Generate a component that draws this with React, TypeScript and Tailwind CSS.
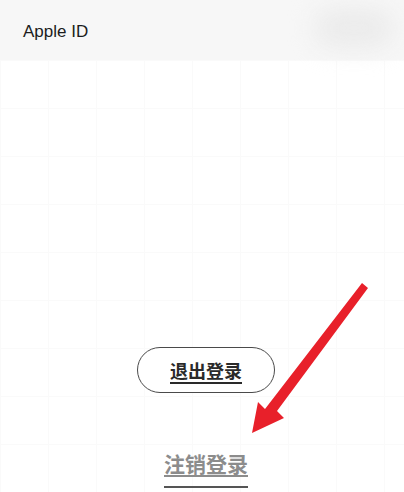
import React from "react";

export default function App() {
  return (
    <div className="relative w-[404px] h-[492px] overflow-hidden bg-white">
      <div className="relative h-[60px] bg-[#f7f7f7] flex items-center pl-[23px]">
        <span className="text-[17px] text-[#1c1c1c] font-['Liberation_Sans',Arial,sans-serif] leading-none mt-[2px]">
          Apple ID
        </span>
        <div className="absolute right-[10px] top-[8px] w-[80px] h-[40px] rounded-full bg-[#ebebeb] blur-[12px]" />
      </div>
      <div className="h-[432px] pl-[8px] flex flex-col items-center bg-[linear-gradient(to_right,#fafafa_1px,transparent_1px),linear-gradient(to_bottom,#fafafa_1px,transparent_1px)] bg-[size:48px_48px]">
        <div className="mt-[287px] w-[138px] h-[46px] rounded-full border-[1.5px] border-[#4a4a4a] bg-white flex items-center justify-center">
          <span className="text-[18px] font-bold text-[#2a2a2a] underline underline-offset-[4px] decoration-[1.5px] font-['Noto_Sans_CJK_SC',sans-serif] leading-none">
            退出登录
          </span>
        </div>
        <div className="mt-[60px] flex flex-col items-center">
          <span className="text-[21px] font-bold text-[#8c8c8c] underline underline-offset-[3px] decoration-[1.5px] font-['Noto_Sans_CJK_SC',sans-serif] leading-none">
            注销登录
          </span>
          <div className="mt-[12px] w-[84px] h-[2px] bg-[#555]" />
        </div>
      </div>
      <svg className="absolute left-0 top-0" width="404" height="492" viewBox="0 0 404 492">
        <path d="M362 283 L368 288 L277 411 L284 418 L252 433 L258 402 L265 409 Z" fill="#e8202a" />
      </svg>
    </div>
  );
}
